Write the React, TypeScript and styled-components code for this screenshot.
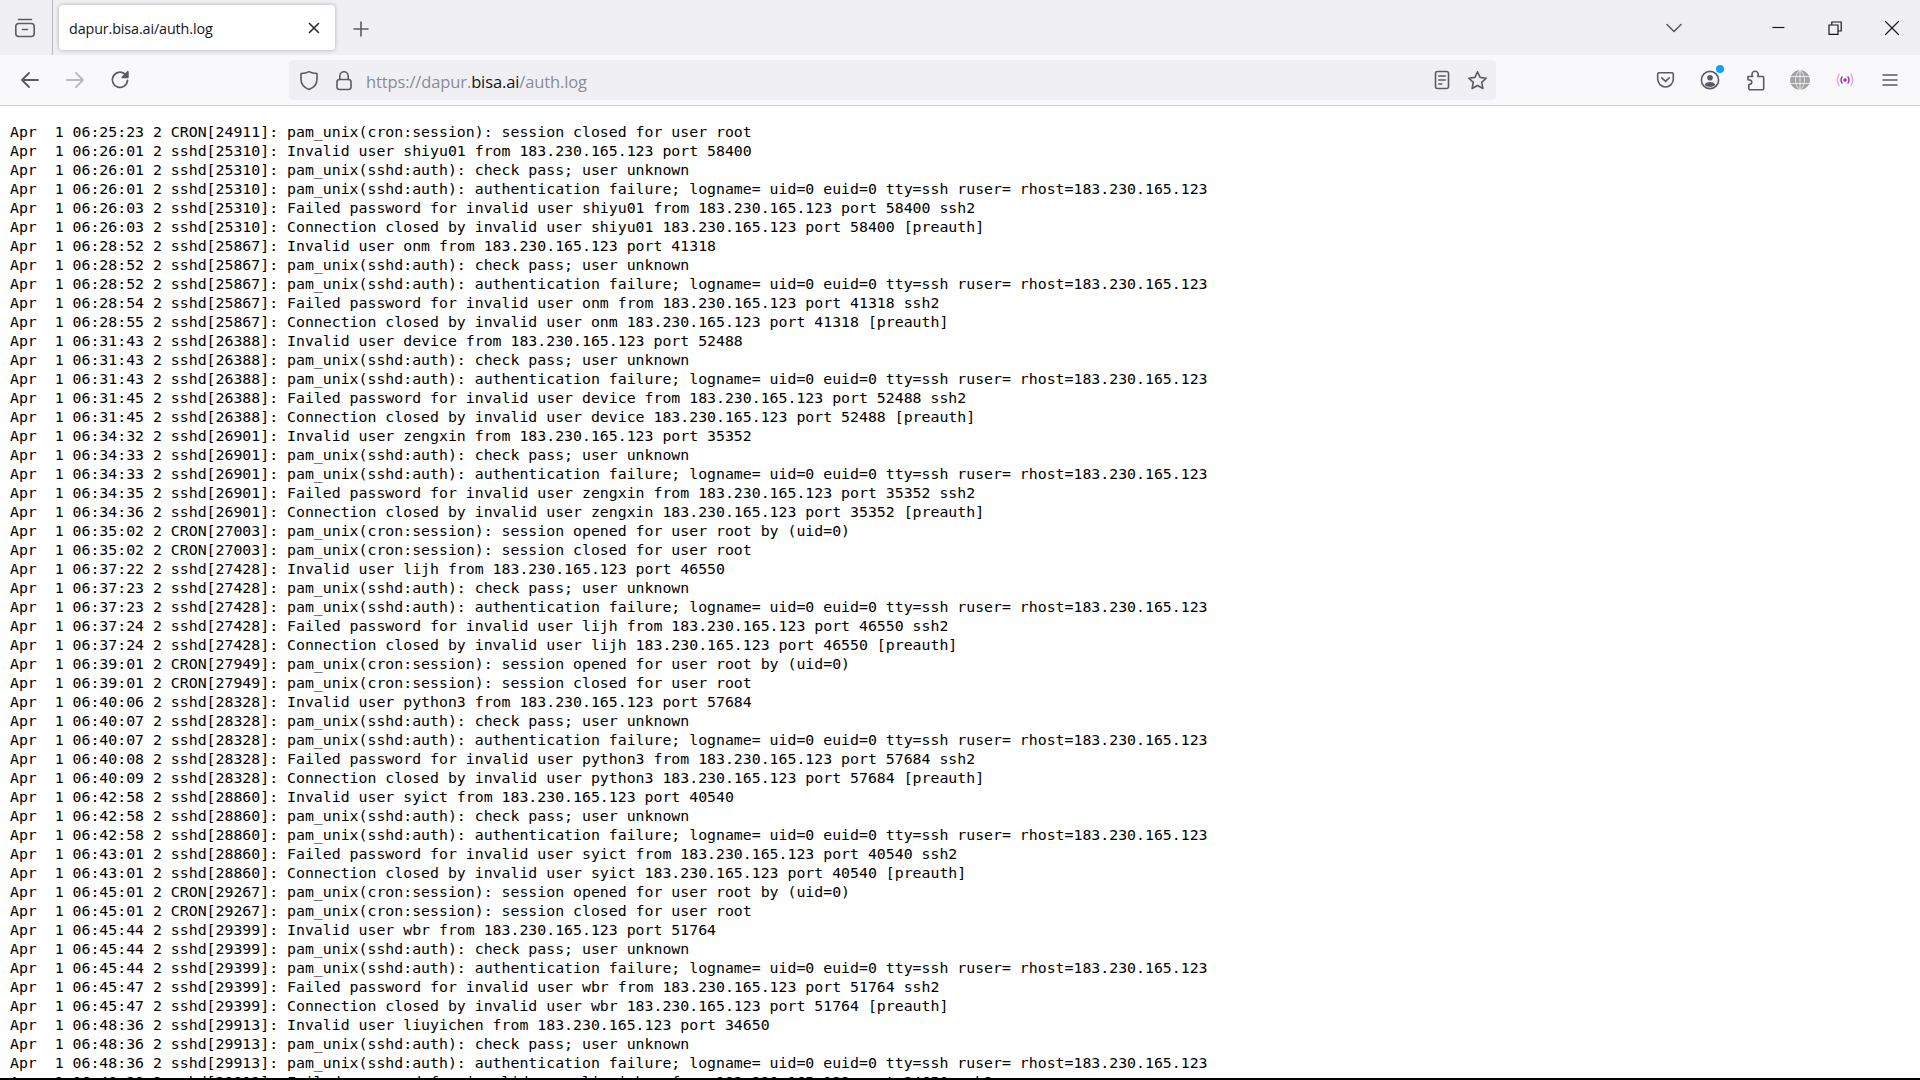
import React from "react";
import styled, { createGlobalStyle } from "styled-components";

const LOG = `Apr  1 06:25:23 2 CRON[24911]: pam_unix(cron:session): session closed for user root
Apr  1 06:26:01 2 sshd[25310]: Invalid user shiyu01 from 183.230.165.123 port 58400
Apr  1 06:26:01 2 sshd[25310]: pam_unix(sshd:auth): check pass; user unknown
Apr  1 06:26:01 2 sshd[25310]: pam_unix(sshd:auth): authentication failure; logname= uid=0 euid=0 tty=ssh ruser= rhost=183.230.165.123
Apr  1 06:26:03 2 sshd[25310]: Failed password for invalid user shiyu01 from 183.230.165.123 port 58400 ssh2
Apr  1 06:26:03 2 sshd[25310]: Connection closed by invalid user shiyu01 183.230.165.123 port 58400 [preauth]
Apr  1 06:28:52 2 sshd[25867]: Invalid user onm from 183.230.165.123 port 41318
Apr  1 06:28:52 2 sshd[25867]: pam_unix(sshd:auth): check pass; user unknown
Apr  1 06:28:52 2 sshd[25867]: pam_unix(sshd:auth): authentication failure; logname= uid=0 euid=0 tty=ssh ruser= rhost=183.230.165.123
Apr  1 06:28:54 2 sshd[25867]: Failed password for invalid user onm from 183.230.165.123 port 41318 ssh2
Apr  1 06:28:55 2 sshd[25867]: Connection closed by invalid user onm 183.230.165.123 port 41318 [preauth]
Apr  1 06:31:43 2 sshd[26388]: Invalid user device from 183.230.165.123 port 52488
Apr  1 06:31:43 2 sshd[26388]: pam_unix(sshd:auth): check pass; user unknown
Apr  1 06:31:43 2 sshd[26388]: pam_unix(sshd:auth): authentication failure; logname= uid=0 euid=0 tty=ssh ruser= rhost=183.230.165.123
Apr  1 06:31:45 2 sshd[26388]: Failed password for invalid user device from 183.230.165.123 port 52488 ssh2
Apr  1 06:31:45 2 sshd[26388]: Connection closed by invalid user device 183.230.165.123 port 52488 [preauth]
Apr  1 06:34:32 2 sshd[26901]: Invalid user zengxin from 183.230.165.123 port 35352
Apr  1 06:34:33 2 sshd[26901]: pam_unix(sshd:auth): check pass; user unknown
Apr  1 06:34:33 2 sshd[26901]: pam_unix(sshd:auth): authentication failure; logname= uid=0 euid=0 tty=ssh ruser= rhost=183.230.165.123
Apr  1 06:34:35 2 sshd[26901]: Failed password for invalid user zengxin from 183.230.165.123 port 35352 ssh2
Apr  1 06:34:36 2 sshd[26901]: Connection closed by invalid user zengxin 183.230.165.123 port 35352 [preauth]
Apr  1 06:35:02 2 CRON[27003]: pam_unix(cron:session): session opened for user root by (uid=0)
Apr  1 06:35:02 2 CRON[27003]: pam_unix(cron:session): session closed for user root
Apr  1 06:37:22 2 sshd[27428]: Invalid user lijh from 183.230.165.123 port 46550
Apr  1 06:37:23 2 sshd[27428]: pam_unix(sshd:auth): check pass; user unknown
Apr  1 06:37:23 2 sshd[27428]: pam_unix(sshd:auth): authentication failure; logname= uid=0 euid=0 tty=ssh ruser= rhost=183.230.165.123
Apr  1 06:37:24 2 sshd[27428]: Failed password for invalid user lijh from 183.230.165.123 port 46550 ssh2
Apr  1 06:37:24 2 sshd[27428]: Connection closed by invalid user lijh 183.230.165.123 port 46550 [preauth]
Apr  1 06:39:01 2 CRON[27949]: pam_unix(cron:session): session opened for user root by (uid=0)
Apr  1 06:39:01 2 CRON[27949]: pam_unix(cron:session): session closed for user root
Apr  1 06:40:06 2 sshd[28328]: Invalid user python3 from 183.230.165.123 port 57684
Apr  1 06:40:07 2 sshd[28328]: pam_unix(sshd:auth): check pass; user unknown
Apr  1 06:40:07 2 sshd[28328]: pam_unix(sshd:auth): authentication failure; logname= uid=0 euid=0 tty=ssh ruser= rhost=183.230.165.123
Apr  1 06:40:08 2 sshd[28328]: Failed password for invalid user python3 from 183.230.165.123 port 57684 ssh2
Apr  1 06:40:09 2 sshd[28328]: Connection closed by invalid user python3 183.230.165.123 port 57684 [preauth]
Apr  1 06:42:58 2 sshd[28860]: Invalid user syict from 183.230.165.123 port 40540
Apr  1 06:42:58 2 sshd[28860]: pam_unix(sshd:auth): check pass; user unknown
Apr  1 06:42:58 2 sshd[28860]: pam_unix(sshd:auth): authentication failure; logname= uid=0 euid=0 tty=ssh ruser= rhost=183.230.165.123
Apr  1 06:43:01 2 sshd[28860]: Failed password for invalid user syict from 183.230.165.123 port 40540 ssh2
Apr  1 06:43:01 2 sshd[28860]: Connection closed by invalid user syict 183.230.165.123 port 40540 [preauth]
Apr  1 06:45:01 2 CRON[29267]: pam_unix(cron:session): session opened for user root by (uid=0)
Apr  1 06:45:01 2 CRON[29267]: pam_unix(cron:session): session closed for user root
Apr  1 06:45:44 2 sshd[29399]: Invalid user wbr from 183.230.165.123 port 51764
Apr  1 06:45:44 2 sshd[29399]: pam_unix(sshd:auth): check pass; user unknown
Apr  1 06:45:44 2 sshd[29399]: pam_unix(sshd:auth): authentication failure; logname= uid=0 euid=0 tty=ssh ruser= rhost=183.230.165.123
Apr  1 06:45:47 2 sshd[29399]: Failed password for invalid user wbr from 183.230.165.123 port 51764 ssh2
Apr  1 06:45:47 2 sshd[29399]: Connection closed by invalid user wbr 183.230.165.123 port 51764 [preauth]
Apr  1 06:48:36 2 sshd[29913]: Invalid user liuyichen from 183.230.165.123 port 34650
Apr  1 06:48:36 2 sshd[29913]: pam_unix(sshd:auth): check pass; user unknown
Apr  1 06:48:36 2 sshd[29913]: pam_unix(sshd:auth): authentication failure; logname= uid=0 euid=0 tty=ssh ruser= rhost=183.230.165.123
Apr  1 06:48:38 2 sshd[29913]: Failed password for invalid user liuyichen from 183.230.165.123 port 34650 ssh2`;

const Global = createGlobalStyle`
  html, body { margin: 0; padding: 0; background: #fff; }
`;

const Page = styled.div`
  width: 1920px;
  height: 1080px;
  display: flex;
  flex-direction: column;
  overflow: hidden;
  background: #fff;
`;

const TabStrip = styled.header`
  height: 55px;
  flex: none;
  display: flex;
  align-items: center;
  background: #f0f0f4;
`;

const TabManager = styled.div`
  width: 53px;
  height: 100%;
  flex: none;
  display: flex;
  align-items: center;
  justify-content: center;
  padding: 1px 3px 0 0;
  box-sizing: border-box;
  border-right: 1px solid #b8b8be;
`;

const Tab = styled.div`
  width: 276px;
  height: 45px;
  margin-left: 6px;
  box-sizing: border-box;
  padding: 0 14.5px 0 10px;
  display: flex;
  align-items: center;
  justify-content: space-between;
  background: #fff;
  border-radius: 4px;
  box-shadow: 0 0 4px rgba(0, 0, 0, 0.28);
  font: 400 14.3px "Open Sans", "Noto Sans", sans-serif;
  letter-spacing: -0.1px;
  color: #15141a;
`;

const TabTitle = styled.span`
  padding-top: 2px;
`;

const NewTab = styled.div`
  width: 52px;
  display: flex;
  align-items: center;
  justify-content: center;
  padding-top: 3px;
`;

const Spacer = styled.div`
  flex: 1;
`;

const AllTabs = styled.div`
  width: 48px;
  margin-right: 52px;
  display: flex;
  justify-content: center;
  padding-top: 1px;
`;

const WindowButton = styled.div`
  width: 56.6px;
  display: flex;
  justify-content: center;
`;

const Toolbar = styled.nav`
  height: 51px;
  flex: none;
  box-sizing: border-box;
  padding: 0 8px 0 8px;
  display: flex;
  align-items: center;
  background: #f9f9fb;
  border-bottom: 1px solid #cfcfd8;
`;

const ToolButton = styled.div`
  width: 44.8px;
  height: 40px;
  flex: none;
  position: relative;
  display: flex;
  align-items: center;
  justify-content: center;
`;

const UrlBar = styled.div`
  width: 1207px;
  height: 40px;
  margin-left: 146.6px;
  margin-right: auto;
  box-sizing: border-box;
  padding: 0 7.5px 0 9px;
  display: flex;
  align-items: center;
  background: #f0f0f4;
  border-radius: 4px;
`;

const UrlIcon = styled.div<{ $gap: number }>`
  width: 22px;
  height: 22px;
  flex: none;
  display: flex;
  align-items: center;
  justify-content: center;
  margin-right: ${(p) => p.$gap}px;
`;

const UrlText = styled.div`
  flex: 1;
  padding-top: 2px;
  font: 400 16.5px "Open Sans", "Noto Sans", sans-serif;
  letter-spacing: -0.12px;
  color: #8a8a92;
  white-space: nowrap;
`;

const Host = styled.span`
  color: #15141a;
`;

const Badge = styled.span`
  position: absolute;
  top: 5px;
  left: 28px;
  width: 8px;
  height: 8px;
  border-radius: 50%;
  background: #0aa5f5;
`;

const Content = styled.main`
  flex: 1;
  min-height: 0;
  overflow: hidden;
`;

const Log = styled.pre`
  margin: 17px 0 0 10px;
  font: 400 14.855px/19px "DejaVu Sans Mono", "Liberation Mono", monospace;
  color: #000;
  white-space: pre;
`;

const BottomEdge = styled.div`
  height: 2px;
  flex: none;
  background: #000;
`;

const Svg = styled.svg<{ $c?: string; $w?: number }>`
  display: block;
  fill: none;
  stroke: ${(p) => p.$c ?? "#5b5b66"};
  stroke-width: ${(p) => p.$w ?? 1.6};
  stroke-linecap: round;
  stroke-linejoin: round;
`;

const TabsIcon = () => (
  <Svg width="22" height="20" viewBox="0 0 22 20">
    <path d="M4.500 1.500h13" />
    <rect x="1.800" y="5.500" width="18.400" height="13" rx="3" />
    <path d="M8.500 11.500h5" />
  </Svg>
);
const CloseSmall = () => (
  <Svg width="14" height="14" viewBox="0 0 14 14" $c="#2b2a33">
    <path d="M2.500 2.500l9 9M11.500 2.500l-9 9" />
  </Svg>
);
const Plus = () => (
  <Svg width="16" height="16" viewBox="0 0 16 16">
    <path d="M8 1v14M1 8h14" />
  </Svg>
);
const Chevron = () => (
  <Svg width="18" height="12" viewBox="0 0 18 12">
    <path d="M2 2.500l7 7 7-7" />
  </Svg>
);
const WinMin = () => (
  <Svg width="14" height="14" viewBox="0 0 14 14" $c="#1a1a1a" $w={1.2}>
    <path d="M.4 6.500h12" strokeLinecap="butt" />
  </Svg>
);
const WinRestore = () => (
  <Svg width="14" height="14" viewBox="0 0 14 14" $c="#1a1a1a" $w={1.2}>
    <path d="M1 4h9v9.400H1zM3.800 4V1h9.400v9H10" strokeLinecap="butt" strokeLinejoin="miter" />
  </Svg>
);
const WinClose = () => (
  <Svg width="16" height="16" viewBox="0 0 16 16" $c="#1a1a1a" $w={1.2}>
    <path d="M1.500 1.500l13 13M14.500 1.500l-13 13" />
  </Svg>
);
const Back = () => (
  <Svg width="20" height="18" viewBox="0 0 20 18" $w={1.8}>
    <path d="M18 9H2M9 2L2 9l7 7" />
  </Svg>
);
const Forward = () => (
  <Svg width="20" height="18" viewBox="0 0 20 18" $c="#b9b9bf" $w={1.8}>
    <path d="M2 9h16M11 2l7 7-7 7" />
  </Svg>
);
const Reload = () => (
  <Svg width="20" height="20" viewBox="0 0 20 20" $w={1.8}>
    <path d="M17.500 10.500A7.600 7.600 0 1 1 14.800 4" />
    <path d="M17.800 1.800v5.500h-5.500z" fill="#5b5b66" />
  </Svg>
);
const Shield = () => (
  <Svg width="20" height="21" viewBox="0 0 20 21">
    <path d="M10 1.600c2.400 1.300 5 1.800 8 1.900v5.600c0 5.200-3.400 8.800-8 10.300-4.600-1.500-8-5.100-8-10.300V3.500c3-.1 5.600-.6 8-1.900z" />
  </Svg>
);
const Lock = () => (
  <Svg width="18" height="21" viewBox="0 0 18 21">
    <rect x="2" y="9.500" width="14" height="10" rx="2.500" />
    <path d="M4.800 9.500V6a4.200 4.200 0 0 1 8.400 0v3.500" />
  </Svg>
);
const Reader = () => (
  <Svg width="16" height="20" viewBox="0 0 16 20">
    <rect x="1.500" y="1.500" width="13" height="17" rx="2" />
    <path d="M4.800 6h6.400M4.800 10h6.400M4.800 14h3" />
  </Svg>
);
const Star = () => (
  <Svg width="21" height="21" viewBox="0 0 21 21">
    <path d="M10.500 1.800l2.600 5.600 6.100.8-4.500 4.200 1.200 6.100-5.400-3-5.400 3 1.200-6.100-4.500-4.200 6.100-.8z" />
  </Svg>
);
const Pocket = () => (
  <Svg width="19" height="18" viewBox="0 0 19 18">
    <path d="M3 1.800h13c.8 0 1.300.5 1.300 1.300V8c0 4.400-3.500 8-7.800 8s-7.800-3.600-7.800-8V3.100c0-.8.5-1.300 1.300-1.300z" />
    <path d="M5.800 6.800l3.700 3.500 3.700-3.500" />
  </Svg>
);
const Account = () => (
  <Svg width="20" height="20" viewBox="0 0 20 20">
    <circle cx="10" cy="10" r="8.600" />
    <circle cx="10" cy="7.700" r="2.800" fill="#5b5b66" stroke="none" />
    <path d="M4.700 15.100c.5-2.300 2.300-3.200 5.300-3.200s4.800.9 5.300 3.200c-1.400 1.200-3.300 1.900-5.300 1.900s-3.900-.7-5.300-1.900z" fill="#5b5b66" stroke="none" />
  </Svg>
);
const Puzzle = () => (
  <Svg width="19" height="21" viewBox="0 0 19 21">
    <path d="M2 6.500h4.600c-.4-.7-.7-1.300-.7-2 0-1.700 1.400-3.200 3.200-3.200s3.200 1.500 3.200 3.200c0 .7-.2 1.300-.6 2h4.800c.7 0 1.200.5 1.200 1.200v10.800c0 .7-.5 1.200-1.200 1.200H4c-.7 0-1.200-.5-1.200-1.200v-4c1.600 0 3-1 3-2.200s-1.400-2.500-3.800-2.500z" />
  </Svg>
);
const Globe = () => (
  <Svg width="20" height="20" viewBox="0 0 20 20" $c="#f9f9fb" $w={0.8}>
    <circle cx="10" cy="10" r="10" fill="#a3a3a3" stroke="none" />
    <path d="M0 6.500h20M0 13.500h20M10 0v20M10 0c-6 5-6 15 0 20M10 0c6 5 6 15 0 20" />
  </Svg>
);
const Broadcast = () => (
  <Svg width="18" height="16" viewBox="0 0 18 16" $c="#d9a8ea" $w={1.3}>
    <path d="M3.200 2.200c-2.200 3.400-2.200 8.200 0 11.600M14.800 2.200c2.200 3.400 2.200 8.200 0 11.600" />
    <path d="M6 4.800c-1.300 2-1.300 4.400 0 6.400M12 4.800c1.300 2 1.300 4.400 0 6.400" stroke="#9b2fb8" />
    <circle cx="9" cy="8" r="1.700" fill="#9b2fb8" stroke="none" />
  </Svg>
);
const Menu = () => (
  <Svg width="16" height="14" viewBox="0 0 16 14">
    <path d="M1 2h14M1 7h14M1 12h14" />
  </Svg>
);

export default function App() {
  return (
    <Page>
      <Global />
      <TabStrip>
        <TabManager>
          <TabsIcon />
        </TabManager>
        <Tab>
          <TabTitle>dapur.bisa.ai/auth.log</TabTitle>
          <CloseSmall />
        </Tab>
        <NewTab>
          <Plus />
        </NewTab>
        <Spacer />
        <AllTabs>
          <Chevron />
        </AllTabs>
        <WindowButton>
          <WinMin />
        </WindowButton>
        <WindowButton>
          <WinRestore />
        </WindowButton>
        <WindowButton>
          <WinClose />
        </WindowButton>
      </TabStrip>
      <Toolbar>
        <ToolButton><Back /></ToolButton>
        <ToolButton><Forward /></ToolButton>
        <ToolButton><Reload /></ToolButton>
        <UrlBar>
          <UrlIcon $gap={13}><Shield /></UrlIcon>
          <UrlIcon $gap={11}><Lock /></UrlIcon>
          <UrlText>
            https://dapur.<Host>bisa.ai</Host>/auth.log
          </UrlText>
          <UrlIcon $gap={13}><Reader /></UrlIcon>
          <UrlIcon $gap={0}><Star /></UrlIcon>
        </UrlBar>
        <ToolButton><Pocket /></ToolButton>
        <ToolButton><Account /><Badge /></ToolButton>
        <ToolButton><Puzzle /></ToolButton>
        <ToolButton><Globe /></ToolButton>
        <ToolButton><Broadcast /></ToolButton>
        <ToolButton><Menu /></ToolButton>
      </Toolbar>
      <Content>
        <Log>{LOG}</Log>
      </Content>
      <BottomEdge />
    </Page>
  );
}
